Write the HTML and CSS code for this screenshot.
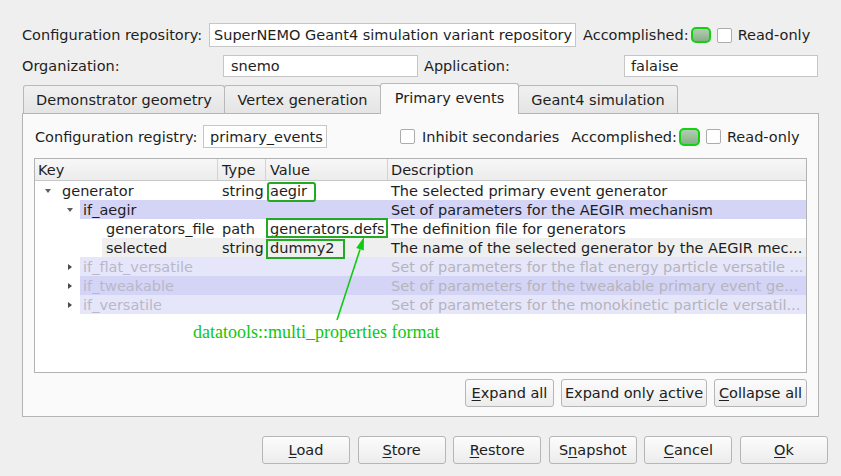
FILE: index.html
```html
<!DOCTYPE html>
<html>
<head>
<meta charset="utf-8">
<title>Configuration</title>
<link rel="stylesheet" href="styles.css">
</head>
<body>
<div class="win">
  <div class="row r1">
    <span class="lbl l-repo">Configuration repository:</span>
    <div class="input in-repo">SuperNEMO Geant4 simulation variant repository</div>
    <span class="lbl acc">Accomplished:</span>
    <span class="led"></span>
    <span class="chk"></span>
    <span class="lbl ro">Read-only</span>
  </div>
  <div class="row r2">
    <span class="lbl l-org">Organization:</span>
    <div class="input in-org">snemo</div>
    <span class="lbl l-app">Application:</span>
    <div class="input in-app">falaise</div>
  </div>
  <div class="tabs">
    <div class="tab t1">Demonstrator geometry</div>
    <div class="tab t2">Vertex generation</div>
    <div class="tab t3 sel">Primary events</div>
    <div class="tab t4">Geant4 simulation</div>
  </div>
  <div class="pane">
    <div class="row r3">
      <span class="lbl l-reg">Configuration registry:</span>
      <div class="input in-reg">primary_events</div>
      <span class="chk chk-inh"></span>
      <span class="lbl inh">Inhibit secondaries</span>
      <span class="lbl acc2">Accomplished:</span>
      <span class="led led2"></span>
      <span class="chk"></span>
      <span class="lbl ro">Read-only</span>
    </div>
    <div class="tree">
      <div class="thead">
        <div class="hc hk">Key</div>
        <div class="hc ht">Type</div>
        <div class="hc hv">Value</div>
        <div class="hc hd">Description</div>
      </div>
      <div class="trow">
        <div class="ind i0"><span class="arr down"></span></div>
        <div class="bgp">
          <div class="c k k0">generator</div>
          <div class="c ty">string</div>
          <div class="c v">aegir</div>
          <div class="c d">The selected primary event generator</div>
        </div>
      </div>
      <div class="trow">
        <div class="ind i1"><span class="arr down"></span></div>
        <div class="bgp sect-alt">
          <div class="c k k1">if_aegir</div>
          <div class="c ty"></div>
          <div class="c v"></div>
          <div class="c d">Set of parameters for the AEGIR mechanism</div>
        </div>
      </div>
      <div class="trow">
        <div class="ind i2"></div>
        <div class="bgp">
          <div class="c k k2">generators_file</div>
          <div class="c ty">path</div>
          <div class="c v">generators.defs</div>
          <div class="c d">The definition file for generators</div>
        </div>
      </div>
      <div class="trow">
        <div class="ind i2"></div>
        <div class="bgp alt">
          <div class="c k k2">selected</div>
          <div class="c ty">string</div>
          <div class="c v">dummy2</div>
          <div class="c d">The name of the selected generator by the AEGIR mec...</div>
        </div>
      </div>
      <div class="trow off">
        <div class="ind i1"><span class="arr right"></span></div>
        <div class="bgp sect">
          <div class="c k k1">if_flat_versatile</div>
          <div class="c ty"></div>
          <div class="c v"></div>
          <div class="c d">Set of parameters for the flat energy particle versatile ...</div>
        </div>
      </div>
      <div class="trow off">
        <div class="ind i1"><span class="arr right"></span></div>
        <div class="bgp sect-alt">
          <div class="c k k1">if_tweakable</div>
          <div class="c ty"></div>
          <div class="c v"></div>
          <div class="c d">Set of parameters for the tweakable primary event ge...</div>
        </div>
      </div>
      <div class="trow off">
        <div class="ind i1"><span class="arr right"></span></div>
        <div class="bgp sect">
          <div class="c k k1">if_versatile</div>
          <div class="c ty"></div>
          <div class="c v"></div>
          <div class="c d">Set of parameters for the monokinetic particle versatil...</div>
        </div>
      </div>
    </div>
    <div class="tbtns">
      <div class="btn b-exp"><span><u>E</u>xpand all</span></div>
      <div class="btn b-act"><span>Expand only <u>a</u>ctive</span></div>
      <div class="btn b-col"><span><u>C</u>ollapse all</span></div>
    </div>
  </div>
  <div class="btns">
    <div class="btn bb"><span><u>L</u>oad</span></div>
    <div class="btn bb"><span><u>S</u>tore</span></div>
    <div class="btn bb"><span><u>R</u>estore</span></div>
    <div class="btn bb"><span>S<u>n</u>apshot</span></div>
    <div class="btn bb"><span><u>C</u>ancel</span></div>
    <div class="btn bb"><span><u>O</u>k</span></div>
  </div>
</div>

<div class="mark m-tab"></div>
<div class="mark m-aegir"></div>
<div class="mark m-defs"></div>
<div class="mark m-dummy"></div>

<svg class="annot-arrow" width="841" height="476" viewBox="0 0 841 476">
  <line x1="337" y1="320" x2="360" y2="249.5" stroke="#10cc10" stroke-width="1.6"/>
  <polygon points="364,237 363.8,250.6 356.2,248.1" fill="#10cc10"/>
</svg>
<div class="annot-text">datatools::multi_properties format</div>
</body>
</html>
```

FILE: styles.css
```css
* { box-sizing: border-box; }
html, body { margin: 0; padding: 0; }
body {
  width: 841px;
  height: 476px;
  background: #efefef;
  font-family: "DejaVu Sans", sans-serif;
  font-size: 14.5px;
  color: #1e1e1e;
  position: relative;
  overflow: hidden;
}
.win { padding: 23px 0 0 22px; }
.row { display: flex; align-items: center; }
.lbl { white-space: nowrap; }

.input {
  background: #fff;
  border: 1px solid #c6c6c6;
  height: 100%;
  display: flex;
  align-items: center;
  padding-left: 6px;
  white-space: nowrap;
  overflow: hidden;
}

.r1 { height: 24px; }
.l-repo { width: 187px; }
.in-repo { width: 367px; padding-left: 4px; }
.acc { margin-left: 7px; }
.led {
  width: 20px;
  height: 16px;
  margin-left: 2px;
  border: 2px solid #12d012;
  border-radius: 5px;
  background: linear-gradient(#b4ccb4, #86b086);
}
.chk {
  width: 15px;
  height: 15px;
  margin-left: 6px;
  background: #fff;
  border: 1px solid #acacac;
  border-radius: 2px;
}
.ro { margin-left: 6px; }

.r2 { height: 22px; margin-top: 8px; }
.l-org { width: 201px; }
.in-org { width: 195px; padding-left: 7px; }
.l-app { width: 200px; margin-left: 6px; }
.in-app { width: 194px; }

.tabs {
  display: flex;
  align-items: flex-end;
  height: 30px;
  margin-top: 6px;
  padding-left: 1px;
  position: relative;
  z-index: 1;
}
.tab {
  height: 28px;
  display: flex;
  align-items: center;
  justify-content: center;
  border: 1px solid #b9b9b9;
  border-bottom: none;
  border-radius: 3px 3px 0 0;
  background: linear-gradient(#f1f1f1, #e4e4e4);
  white-space: nowrap;
}
.tab + .tab { margin-left: -1px; }
.t1 { width: 202px; }
.t2 { width: 157px; }
.t3 { width: 139px; }
.t4 { width: 160px; }
.tab.sel {
  height: 31px;
  margin-bottom: -1px;
  background: #fafafa;
  padding-bottom: 2px;
}

.pane {
  width: 797px;
  height: 304px;
  border: 1px solid #b4b4b4;
  background: #fafafa;
}
.r3 { height: 23px; margin-top: 11px; padding-left: 12px; }
.l-reg { width: 168px; }
.in-reg { width: 124px; }
.chk-inh { margin-left: 73px; }
.inh { margin-left: 7px; }
.acc2 { margin-left: 12px; }
.led2 { width: 21px; height: 18px; }

.tree {
  margin: 10px 0 0 11px;
  width: 773px;
  height: 215px;
  border: 1px solid #b2b2b2;
  background: #fff;
}
.thead {
  display: flex;
  height: 22px;
  border-bottom: 1px solid #c8c8c8;
  background: linear-gradient(#f7f7f7, #ececec);
}
.hc {
  display: flex;
  align-items: center;
  padding-left: 4px;
  border-right: 1px solid #d2d2d2;
}
.hk { width: 183px; padding-left: 3px; }
.ht { width: 48px; }
.hv { width: 122px; }
.hd { flex: 1; padding-left: 3px; border-right: none; }

.trow { display: flex; height: 19px; }
.ind {
  flex: none;
  display: flex;
  align-items: center;
  justify-content: flex-end;
}
.i0 { width: 24px; }
.i1 { width: 45px; }
.i2 { width: 67px; }
.arr { display: block; width: 0; height: 0; }
.arr.down {
  border-left: 3.5px solid transparent;
  border-right: 3.5px solid transparent;
  border-top: 4px solid #5e5e5e;
  margin-right: 8px;
}
.i1 .arr.down { margin-right: 7px; }
.arr.right {
  border-top: 3.5px solid transparent;
  border-bottom: 3.5px solid transparent;
  border-left: 4px solid #4a4a4a;
  margin-right: 8px;
}
.bgp { flex: 1; display: flex; }
.bgp.alt { background: #efefef; }
.bgp.sect { background: #e6e6fa; }
.bgp.sect-alt { background: #d4d4f7; }
.c {
  display: flex;
  align-items: center;
  white-space: nowrap;
  overflow: hidden;
  padding-left: 4px;
}
.k0 { width: 159px; padding-left: 3px; }
.k1 { width: 138px; padding-left: 3px; }
.k2 { width: 116px; padding-left: 4px; }
.ty { width: 48px; }
.v { width: 122px; }
.d { flex: 1; padding-left: 3px; }
.off .c { color: #b8b8c8; }
.off .d { color: #b4b4bc; }

.btn {
  height: 28px;
  display: flex;
  align-items: center;
  justify-content: center;
  background: linear-gradient(#fcfcfc, #ececec);
  border: 1px solid #b6b6b6;
  border-radius: 3px;
  white-space: nowrap;
  color: #202020;
}
.btn u { text-decoration-thickness: 1px; text-underline-offset: 2px; }
.tbtns {
  display: flex;
  justify-content: flex-end;
  gap: 7px;
  margin-top: 6px;
  padding-right: 11px;
}
.b-exp { width: 89px; }
.b-act { width: 146px; }
.b-col { width: 93px; }

.btns {
  display: flex;
  gap: 7.6px;
  margin-top: 19px;
  padding-left: 240px;
}
.bb { width: 88px; }

.mark {
  position: absolute;
  border: 2px solid #22aa22;
  pointer-events: none;
}
.m-tab {
  left: 382px; top: 83px; width: 126px; height: 30px;
  border-color: #0fd40f;
  border-radius: 4px;
}
.m-aegir { left: 267px; top: 182px; width: 49px; height: 20px; border-radius: 3px; }
.m-defs { left: 266px; top: 218px; width: 122px; height: 20px; }
.m-dummy { left: 266px; top: 239px; width: 79px; height: 20px; }

.annot-arrow {
  position: absolute;
  left: 0; top: 0;
  pointer-events: none;
}
.annot-text {
  position: absolute;
  left: 193px;
  top: 322px;
  font-family: "Liberation Serif", serif;
  font-size: 18px;
  line-height: 20px;
  color: #0ec80e;
  white-space: nowrap;
}
```
